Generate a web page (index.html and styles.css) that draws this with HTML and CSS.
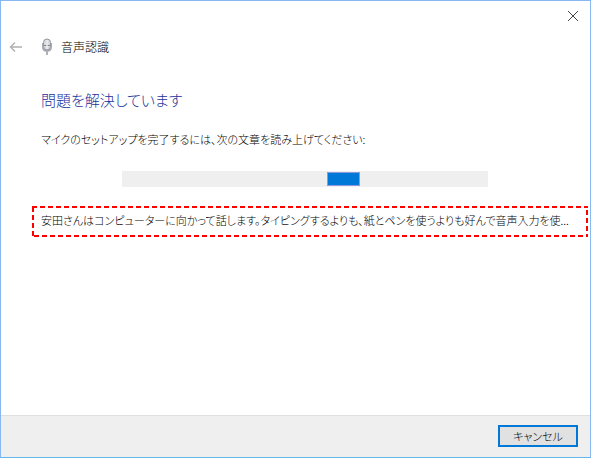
FILE: index.html
```html
<!DOCTYPE html>
<html lang="ja">
<head>
    <meta charset="UTF-8">
    <meta name="viewport" content="width=device-width, initial-scale=1.0">
    <title>音声認識</title>
    <link rel="stylesheet" href="styles.css">
</head>
<body>
    <div class="wizard">
        <div class="title-bar">
            <button class="icon-btn" type="button" aria-label="閉じる">
                <svg width="12" height="12" viewBox="0 0 12 12">
                    <path d="M1 1 L11 11 M11 1 L1 11" fill="none" stroke="#444" stroke-width="1"/>
                </svg>
            </button>
        </div>
        <header class="header">
            <button class="icon-btn" type="button" aria-label="戻る">
                <svg width="14" height="12" viewBox="0 0 14 12">
                    <path d="M13 6 H1.5 M6 1.5 L1.5 6 L6 10.5" fill="none" stroke="#b0b0b0" stroke-width="1.4"/>
                </svg>
            </button>
            <svg class="mic" width="12" height="18" viewBox="0 0 12 18">
                <path d="M1.8 5 V9 C1.8 14.5 10.2 14.5 10.2 9 V5" fill="#d4d6da" stroke="#a9abb1" stroke-width="1.6"/>
                <rect x="2.5" y="1" width="7" height="11" rx="3.5" fill="#d8dade" stroke="#9496a0" stroke-width="1"/>
                <path d="M3 7.5 H9" fill="none" stroke="#85878f" stroke-width="1"/>
                <path d="M6 2 V11" fill="none" stroke="#eceef0" stroke-width="1.4"/>
                <path d="M6 13 V17" fill="none" stroke="#b0b2b6" stroke-width="2"/>
            </svg>
            <span class="app-name">音声認識</span>
        </header>
        <main class="content">
            <h1>問題を解決しています</h1>
            <p>マイクのセットアップを完了するには、次の文章を読み上げてください:</p>
            <div class="meter" role="meter" aria-label="マイクの音量">
                <div class="meter-block"></div>
            </div>
            <div class="sentence">
                <svg class="outline" width="100%" height="100%" aria-hidden="true">
                    <rect width="100%" height="100%"/>
                </svg>
                安田さんはコンピューターに向かって話します。タイピングするよりも、紙とペンを使うよりも好んで音声入力を使...
            </div>
        </main>
        <footer class="footer">
            <button class="btn" type="button">キャンセル</button>
        </footer>
    </div>
</body>
</html>
```
FILE: styles.css
```css
* {
    box-sizing: border-box;
}
body {
    margin: 0;
    font-family: "Noto Sans CJK JP", sans-serif;
    font-weight: 300;
    font-size: 11px;
    line-height: 18px;
    font-feature-settings: "palt";
    color: #000;
}
.wizard {
    display: flex;
    flex-direction: column;
    min-height: 100vh;
    border: 1px solid #88b8f2;
    border-bottom-color: #62b6ea;
    background-color: #fff;
}
.title-bar {
    display: flex;
    justify-content: flex-end;
    padding: 9px 11px 0;
}
.icon-btn {
    display: flex;
    padding: 0;
    border: none;
    background: none;
    cursor: pointer;
}
.header {
    display: flex;
    align-items: center;
    margin-top: 16px;
    padding-left: 8px;
}
.mic {
    margin-left: 18px;
}
.app-name {
    margin-left: 8px;
    font-size: 12px;
}
.content {
    flex: 1;
    padding: 32px 2px 0 40px;
}
h1 {
    margin: 0;
    font-size: 15px;
    font-weight: 300;
    line-height: 24px;
    color: #1a2f9a;
}
p {
    margin: 18px 0 0;
}
.meter {
    display: flex;
    width: 67%;
    height: 16px;
    margin: 23px 0 0 81px;
    padding: 1px 0;
    background-color: #efefef;
}
.meter-block {
    width: 33px;
    margin-left: 56%;
    border: 1px solid #8c9be0;
    background-color: #0078d7;
}
.sentence {
    position: relative;
    margin: 19px 0 0 -9px;
    padding: 5px 9px 8px;
    white-space: nowrap;
    overflow: hidden;
}
.outline {
    position: absolute;
    top: 0;
    left: 0;
}
.outline rect {
    fill: none;
    stroke: #f00;
    stroke-width: 4;
    stroke-dasharray: 5 3;
}
.footer {
    display: flex;
    justify-content: flex-end;
    padding: 9px 12px 10px;
    border-top: 1px solid #dfdfdf;
    background-color: #efefef;
}
.btn {
    width: 80px;
    height: 22px;
    padding: 0;
    border: 2px solid #0078d7;
    background-color: #e1e1e1;
    color: #000;
    font: inherit;
    font-feature-settings: inherit;
    cursor: pointer;
}
```
